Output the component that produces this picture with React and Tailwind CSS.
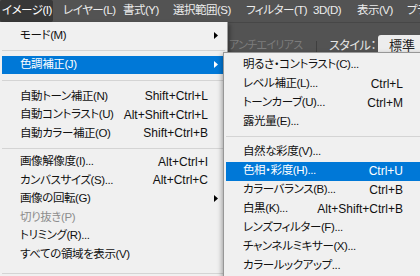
import React from 'react';

const font = "font-['Liberation_Sans','Noto_Sans_CJK_JP',sans-serif] [font-feature-settings:'palt']";

const menuBar = [
  { label: 'イメージ(I)', w: 'w-[63px]', open: true },
  { label: 'レイヤー(L)', w: 'w-[60px]' },
  { label: '書式(Y)', w: 'w-[50px]' },
  { label: '選択範囲(S)', w: 'w-[73px]' },
  { label: 'フィルター(T)', w: 'w-[67px]' },
  { label: '3D(D)', w: 'w-[44px]' },
  { label: '表示(V)', w: 'w-[50px]' },
  { label: 'プラグイン', w: 'w-[13px] overflow-hidden' },
];

const mainItems = [
  { label: 'モード(M)', arrow: true },
  { sep: 'h-[11px] pt-[5px]' },
  { label: '色調補正(J)', arrow: true, active: true },
  { sep: 'h-[13px] pt-[6px]' },
  { label: '自動トーン補正(N)', sc: 'Shift+Ctrl+L' },
  { label: '自動コントラスト(U)', sc: 'Alt+Shift+Ctrl+L' },
  { label: '自動カラー補正(O)', sc: 'Shift+Ctrl+B' },
  { sep: 'h-[10px] pt-[5px]' },
  { label: '画像解像度(I)...', sc: 'Alt+Ctrl+I' },
  { label: 'カンバスサイズ(S)...', sc: 'Alt+Ctrl+C' },
  { label: '画像の回転(G)', arrow: true },
  { label: '切り抜き(P)', disabled: true },
  { label: 'トリミング(R)...' },
  { label: 'すべての領域を表示(V)' },
  { sep: 'h-[19px] pt-[9px]' },
];

const subItems = [
  { label: '明るさ・コントラスト(C)...' },
  { label: 'レベル補正(L)...', sc: 'Ctrl+L' },
  { label: 'トーンカーブ(U)...', sc: 'Ctrl+M' },
  { label: '露光量(E)...' },
  { sep: 'h-[11px] pt-[4px]' },
  { label: '自然な彩度(V)...' },
  { label: '色相・彩度(H)...', sc: 'Ctrl+U', active: true },
  { label: 'カラーバランス(B)...', sc: 'Ctrl+B' },
  { label: '白黒(K)...', sc: 'Alt+Shift+Ctrl+B' },
  { label: 'レンズフィルター(F)...' },
  { label: 'チャンネルミキサー(X)...' },
  { label: 'カラールックアップ...' },
];

const Arrow = ({ white }) => (
  <svg width="4" height="7" viewBox="0 0 4 7" className={white ? 'fill-white' : 'fill-black'}>
    <path d="M0 0L4 3.5L0 7z" />
  </svg>
);

const Separator = ({ cls }) => (
  <div className={cls}>
    <div className="h-px bg-[#d4d4d4]" />
  </div>
);

const App = () => {
  return (
    <div className={`relative w-[420px] h-[276px] overflow-hidden bg-[#535353] ${font}`}>
      {/* menu bar */}
      <div className="flex h-[22px] items-center text-[11.5px] tracking-[-0.5px] text-[#ececec]">
        {menuBar.map(m => (
          <div key={m.label} className={`${m.w} shrink-0 h-full flex items-center whitespace-nowrap`}>
            {m.open ? (
              <div className="h-full w-[53px] flex items-center pl-[2px] bg-[#383838] rounded-[2px] text-white">{m.label}</div>
            ) : (
              m.label
            )}
          </div>
        ))}
      </div>

      {/* options bar behind the menus */}
      <div className="flex h-[46px] items-center text-[12px] border-t border-[#474747]">
        <div className="ml-[229px] w-[87px] text-[11px] text-[#7c7c7c] tracking-[-0.7px] whitespace-nowrap">アンチエイリアス</div>
        <div className="w-px h-[28px] mt-[18px] bg-[#3f3f3f]" />
        <div className="ml-[12px] w-[49px] text-[#e6e6e6] tracking-[-0.4px] whitespace-nowrap">スタイル：</div>
        <div className="flex-1 h-[22px] bg-[#ededed] rounded-l-[3px] pl-[11px] flex items-center text-[13px] text-[#222]">標準</div>
      </div>

      {/* main menu */}
      <div className="absolute left-0 top-[22px] w-[228px] h-[270px] bg-[#f0f0f0] border-r border-[#9c9c9c] pt-[4px] px-[2px] shadow-[2px_2px_4px_rgba(0,0,0,0.35)] text-[11.5px]">
        {mainItems.map((it, i) =>
          it.sep ? (
            <Separator key={i} cls={it.sep} />
          ) : (
            <div
              key={i}
              className={`flex items-center h-[18.5px] pl-[18px] whitespace-nowrap ${
                it.active ? 'bg-[#0078d7] text-white' : it.disabled ? 'text-[#8d8d8d]' : 'text-[#111]'
              }`}
            >
              <span className="flex-1 tracking-[-0.4px]">{it.label}</span>
              {it.sc && <span className="text-[12px]">{it.sc}</span>}
              <span className="w-[17px] flex items-center pl-[6px]">
                {it.arrow && <Arrow white={it.active} />}
              </span>
            </div>
          )
        )}
      </div>

      {/* submenu */}
      <div className="absolute left-[223px] top-[52px] w-[200px] h-[240px] bg-[#f0f0f0] border border-[#979797] pt-[2.5px] pl-[2px] shadow-[-1px_2px_5px_rgba(0,0,0,0.35)] text-[11.5px]">
        {subItems.map((it, i) =>
          it.sep ? (
            <Separator key={i} cls={it.sep} />
          ) : (
            <div
              key={i}
              className={`flex items-center h-[19px] pl-[17px] pr-[19px] whitespace-nowrap ${
                it.active ? 'bg-[#0078d7] text-white' : 'text-[#111]'
              }`}
            >
              <span className="flex-1 tracking-[-0.4px]">{it.label}</span>
              {it.sc && <span className="text-[12px]">{it.sc}</span>}
            </div>
          )
        )}
      </div>
    </div>
  );
};

export default App;
